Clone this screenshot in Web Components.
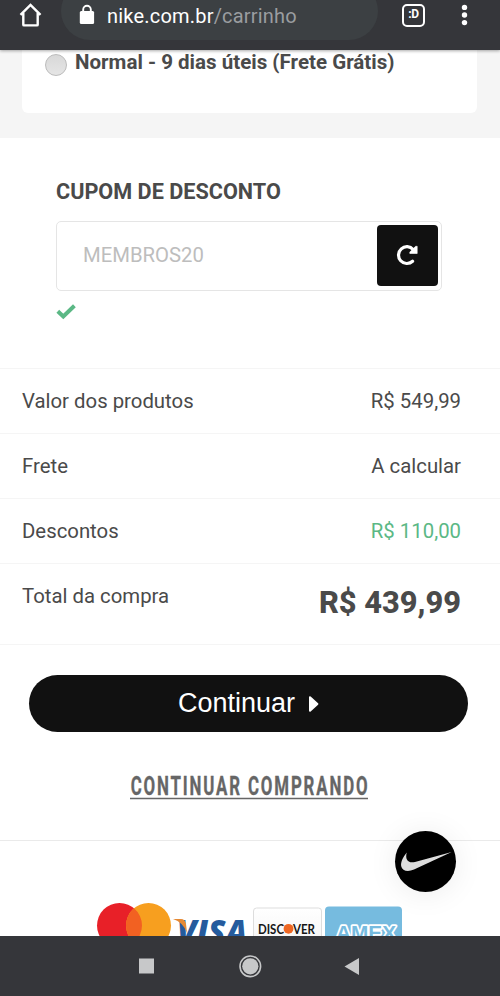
<!DOCTYPE html>
<html lang="pt-BR">
<head>
<meta charset="utf-8">
<title>Carrinho</title>
<style>
html,body{margin:0;height:996px;overflow:hidden;background:#fff;font-family:Roboto,"Liberation Sans",sans-serif;color:#4a4a4a}
</style>
</head>
<body>
<cart-app></cart-app>
<script>
const define = (name, html) => customElements.define(name, class extends HTMLElement {
  constructor() {
    super();
    this.attachShadow({ mode: 'open' }).innerHTML = html;
  }
});

define('browser-bar', `
<style>
:host{display:flex;height:50px;background:#35363a;color:#fff;box-shadow:0 1px 3px #0005;position:relative;z-index:2}
svg{display:block;flex:none}
.home{margin:1px 0 0 17px}
.pill{box-sizing:border-box;width:317px;height:58px;margin:-18px 0 0 17px;padding:18px 0 0 18px;border-radius:29px;background:#3c4043;display:flex}
.url{font-size:20px;line-height:30px;margin:1px 0 0 12px;letter-spacing:.2px;white-space:nowrap}
.url span{color:#9a9da0}
.tabs{box-sizing:border-box;width:23px;height:23px;margin:4px 0 0 24px;border:2.5px solid #fff;border-radius:5px;font:bold 12px/17px Roboto,sans-serif;text-align:center;letter-spacing:-.3px}
.more{margin:3px 0 0 35px}
</style>
<svg class="home" width="27" height="28" viewBox="0 0 27 28"><path d="M3.5 13.8 13.5 4l10 9.8M6.3 12v11.7q0 .7.7.7h13q.7 0 .7-.7V12" fill="none" stroke="#fff" stroke-width="2.4"/></svg>
<div class="pill">
<svg width="16" height="28" viewBox="0 0 16 28"><path d="M4.2 12V9.5a3.8 3.8 0 0 1 7.6 0V12" fill="none" stroke="#fff" stroke-width="1.9"/><rect x=".8" y="11" width="14.3" height="13" rx="1.5" fill="#fff"/></svg>
<div class="url">nike.com.br<span>/carrinho</span></div>
</div>
<div class="tabs">:D</div>
<svg class="more" width="8" height="26" fill="#fff"><circle cx="4.5" cy="4.4" r="2.7"/><circle cx="4.5" cy="12" r="2.7"/><circle cx="4.5" cy="19.6" r="2.7"/></svg>`);

define('shipping-option', `
<style>
:host{display:block;box-sizing:border-box;height:88px;padding:0 23px 25px 22px;background:#f5f5f5}
.card{height:63px;background:#fff;border-radius:0 0 6px 6px;display:flex}
.radio{box-sizing:border-box;width:22px;height:22px;margin:4px 0 0 23px;border:1px solid #bbb;border-radius:50%;background:linear-gradient(#d8d8d8,#e5e5e5)}
b{font-size:20.55px;line-height:25px;margin-left:8px;white-space:nowrap}
</style>
<div class="card"><div class="radio"></div><b><slot></slot></b></div>`);

define('coupon-form', `
<style>
:host{display:block;box-sizing:border-box;height:230px;padding:42px 58px 0 56px}
h2{font-size:21.65px;line-height:24px;margin:0 0 17px;white-space:nowrap}
.field{box-sizing:border-box;width:386px;height:70px;border:1px solid #e5e5e5;border-radius:5px;display:flex;justify-content:space-between;padding:3px 3px 0 26px}
.code{font-size:20.3px;line-height:61px;color:#bdbdbd}
.button{width:61px;height:61px;border-radius:4px;background:#111}
svg{display:block}
.check{margin-top:13px}
</style>
<h2>CUPOM DE DESCONTO</h2>
<div class="field"><div class="code">MEMBROS20</div><div class="button"><svg width="61" height="61" viewBox="0 0 61 61"><path d="M35.6 36.3A8.4 8.4 0 1 1 36.2 24.5" fill="none" stroke="#fff" stroke-width="3.2" stroke-linecap="round"/><path d="M40.2 21.3v7.2h-7.4v-1.4l5.8-5.8z" fill="#fff" stroke="#fff" stroke-width=".6" stroke-linejoin="round"/></svg></div></div>
<svg class="check" width="21" height="16" viewBox="0 0 21 16"><path d="M1.8 7.2 7.3 12.4 18.4 1.8" fill="none" stroke="#5bb885" stroke-width="4"/></svg>`);

define('summary-row', `
<style>
:host{display:flex;justify-content:space-between;box-sizing:border-box;height:65px;border-top:1px solid #f5f5f5;padding:20px 39px 0 22px;font-size:20.35px;line-height:24px;white-space:nowrap}
:host([green]) .value{color:#5bb885}
:host([total]){height:81px}
:host([total]) .value{font-size:30.8px;line-height:37px;font-weight:800}
</style>
<span class="label"><slot></slot></span><span class="value"><slot name="value"></slot></span>`);

define('cart-actions', `
<style>
:host{display:block;box-sizing:border-box;height:197px;border-top:1px solid #f5f5f5;border-bottom:1px solid #eaeaea;padding:30px 32px 0 29px}
.go{height:57px;border-radius:29px;background:#111;color:#fff;display:flex;font:27px/57px "Liberation Sans",Arial,sans-serif}
.go span{margin-left:149px}
.go svg{margin:20px 0 0 13px}
.keep{margin:39px 0 0 101px;width:238px;height:33px;display:block}
</style>
<div class="go"><span>Continuar</span><svg width="12" height="18"><path d="M2 2.2v13.6L9.4 9z" fill="#fff" stroke="#fff" stroke-width="2" stroke-linejoin="round"/></svg></div>
<svg class="keep" width="238" height="33"><text x="1" y="24.5" font-family="Roboto,sans-serif" font-size="25.5" font-weight="700" fill="#666" stroke="#666" stroke-width=".35" transform="scale(.66 1)" textLength="359" lengthAdjust="spacing">CONTINUAR COMPRANDO</text><path d="M0 27.5h238" stroke="#666" stroke-width="1.7"/></svg>`);

define('payment-brands', `
<style>
:host{display:flex;height:95px;box-sizing:border-box;padding:61px 0 0 96px;background:#fff;overflow:hidden}
svg{display:block;flex:none}
</style>
<svg width="76" height="45"><circle cx="23.5" cy="23.5" r="22.5" fill="#e82028"/><circle cx="52.5" cy="23.5" r="22.5" fill="#f79f1f"/><path d="M38 6.3a22.5 22.5 0 0 1 0 34.4a22.5 22.5 0 0 1 0-34.4z" fill="#f26122"/></svg>
<svg width="80" height="45"><text x="5" y="42" font-family="Open Sans,sans-serif" font-size="34" font-weight="800" font-style="italic" fill="#255b9d" textLength="70" lengthAdjust="spacingAndGlyphs">VISA</text><path d="M1 17h8q4 0 5 5l1 9Q11 20 1 17z" fill="#e58a35"/></svg>
<svg width="73" height="45"><defs><linearGradient id="d" x2="0" y2="1"><stop stop-color="#fff"/><stop offset="1" stop-color="#f1f1f1"/></linearGradient></defs><rect x="1.5" y="6" width="68" height="50" rx="3" fill="url(#d)" stroke="#ddd"/><g font-family="Lato,sans-serif" font-weight="700" font-size="13.5" fill="#161616"><text x="6" y="31.5" textLength="26" lengthAdjust="spacingAndGlyphs">DISC</text><text x="41" y="31.5" textLength="22" lengthAdjust="spacingAndGlyphs">VER</text></g><circle cx="36.5" cy="26.8" r="4.9" fill="#ee6723"/></svg>
<svg width="78" height="45"><rect x="0" y="4.5" width="77" height="52" rx="4" fill="#76bbdf"/><text x="11" y="37.5" font-family="Liberation Sans,sans-serif" font-weight="700" font-size="21" fill="#76bbdf" stroke="#fff" stroke-width="3.6" stroke-linejoin="round" paint-order="stroke" textLength="60" lengthAdjust="spacingAndGlyphs">AMEX</text></svg>`);

define('brand-bubble', `
<style>
:host{position:absolute;left:395px;top:831px;width:61px;height:61px;border-radius:50%;background:#000;box-shadow:0 2px 30px #00000014;z-index:1}
svg{display:block}
</style>
<svg width="61" height="61"><path d="M11.8 21.5C8 26 5.5 31 6.2 35.2C7.2 40.2 13 41 19 38.6L56.7 21L20 30.9C13 32.7 9.8 28.5 11.8 21.5z" fill="#ddd"/></svg>`);

define('system-nav', `
<style>
:host{display:block;height:60px;background:#35363a;position:relative;z-index:2}
svg{display:block}
</style>
<svg width="500" height="60"><rect x="139" y="22.5" width="15" height="15" fill="#c7c8c9"/><circle cx="250.3" cy="30.3" r="10.3" fill="none" stroke="#c7c8c9" stroke-width="1.6"/><circle cx="250.3" cy="30.3" r="8.1" fill="#c7c8c9"/><path d="M344.5 30.5 359 22v17z" fill="#c7c8c9"/></svg>`);

define('cart-app', `
<style>
:host{display:block;position:relative;width:500px;height:996px;overflow:hidden;background:#fff}
</style>
<browser-bar></browser-bar>
<shipping-option>Normal - 9 dias úteis (Frete Grátis)</shipping-option>
<coupon-form></coupon-form>
<summary-row>Valor dos produtos<span slot="value">R$ 549,99</span></summary-row>
<summary-row>Frete<span slot="value">A calcular</span></summary-row>
<summary-row green>Descontos<span slot="value">R$ 110,00</span></summary-row>
<summary-row total>Total da compra<span slot="value">R$ 439,99</span></summary-row>
<cart-actions></cart-actions>
<payment-brands></payment-brands>
<system-nav></system-nav>
<brand-bubble></brand-bubble>`);
</script>
</body>
</html>
